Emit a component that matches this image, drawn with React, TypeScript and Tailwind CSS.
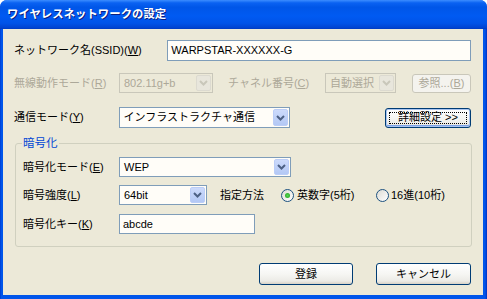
import React from "react";

const font = "font-['Liberation_Sans','Noto_Sans_CJK_JP',sans-serif]";

function M({ c }: { c: string }) {
  return (
    <span>
      (<span className="underline underline-offset-[1px]">{c}</span>)
    </span>
  );
}

function Chevron({ color }: { color: string }) {
  return (
    <svg width="9" height="6" viewBox="0 0 9 6">
      <polyline points="1,1 4.5,4.5 8,1" fill="none" stroke={color} strokeWidth="2" />
    </svg>
  );
}

function Select({
  value,
  w,
  h,
  disabled,
}: {
  value: string;
  w: string;
  h: string;
  disabled?: boolean;
}) {
  return (
    <div
      className={`${w} ${h} flex items-stretch border ${
        disabled ? "border-[#C9C7BA] bg-[#ECE9D8] text-[#ACA899]" : "border-[#7F9DB9] bg-[#FFFDF8] text-black"
      } p-[1px]`}
    >
      <div className="flex-1 flex items-center pl-[3px] whitespace-nowrap overflow-hidden">{value}</div>
      <div
        className={`w-[15px] flex items-center justify-center rounded-[2px] ${
          disabled
            ? "bg-[#E8E6DC] border border-[#DCDAD0]"
            : "bg-[linear-gradient(to_bottom,#CCDAFB,#B3C8F5)] border border-[#BBCDF7]"
        }`}
      >
        <Chevron color={disabled ? "#C9C7BA" : "#4D6185"} />
      </div>
    </div>
  );
}

function Input({ value, w, h }: { value: string; w: string; h: string }) {
  return (
    <div className={`${w} ${h} flex items-center border border-[#7F9DB9] bg-[#FFFDF8] pl-[3px] text-black`}>
      {value}
    </div>
  );
}

function Button({
  children,
  w,
  h,
  disabled,
  isDefault,
}: {
  children: React.ReactNode;
  w: string;
  h: string;
  disabled?: boolean;
  isDefault?: boolean;
}) {
  if (disabled) {
    return (
      <div
        className={`${w} ${h} flex items-center justify-center rounded-[3px] border border-[#C9C7BA] bg-[#F4F3EE] text-[#ACA899]`}
      >
        {children}
      </div>
    );
  }
  return (
    <div
      className={`${w} ${h} relative flex items-center justify-center rounded-[3px] border border-[#003C74] bg-[linear-gradient(to_bottom,#FFFFFF_0%,#F6F6F3_50%,#ECEBE6_85%,#D8D2C6_100%)] text-black ${
        isDefault ? "shadow-[inset_0_0_0_1px_#A9C4F0,inset_0_-1px_0_1px_#7BA2E7]" : ""
      }`}
    >
      {isDefault && (
        <div className="absolute inset-[3px] border border-dotted border-black pointer-events-none" />
      )}
      {children}
    </div>
  );
}

function Radio({ checked }: { checked?: boolean }) {
  return (
    <div className="w-[13px] h-[13px] rounded-full border border-[#1C5180] bg-[linear-gradient(135deg,#DCDBD4,#FFFFFF)] flex items-center justify-center">
      {checked && (
        <div className="w-[5px] h-[5px] rounded-full bg-[radial-gradient(circle,#55D551,#1E9E1E)]" />
      )}
    </div>
  );
}

export default function App() {
  return (
    <div className={`${font} text-[11px] leading-none bg-white w-[487px] h-[299px]`}>
      <div className="w-[487px] h-[299px] flex flex-col rounded-t-[7px] overflow-hidden bg-[#0050E6]">
        {/* Title bar */}
        <div className="h-[29px] shrink-0 flex items-center pl-[7px] bg-[linear-gradient(to_bottom,#3C8DFF_0%,#0A62F2_10%,#0056E8_25%,#005AF2_55%,#0053E8_80%,#0044D2_95%,#003AC0_100%)]">
          <span className="text-white font-bold text-[11.3px] tracking-[0.1px] [text-shadow:1px_1px_0_#0A1E80] mt-[1px]">
            ワイヤレスネットワークの設定
          </span>
        </div>
        {/* Frame */}
        <div className="flex-1 flex flex-col pl-[3px] pr-[4px] pb-[4px] bg-[linear-gradient(to_right,#0032C8_0px,#0055EA_1px,#0055EA_calc(100%-2px),#0030C0_100%)]">
          <div className="flex-1 bg-[#ECE9D8] flex flex-col pl-[11px] pr-[12px] pt-[11px] text-black">
            {/* Row 1 */}
            <div className="h-[21px] flex items-center">
              <div className="w-[154px] whitespace-nowrap">
                ネットワーク名(SSID)<M c="W" />
              </div>
              <Input value="WARPSTAR-XXXXXX-G" w="w-[305px]" h="h-[21px]" />
            </div>
            {/* Row 2 (disabled) */}
            <div className="h-[20px] mt-[12px] flex items-center text-[#ACA899]">
              <div className="w-[105px] whitespace-nowrap">
                無線動作モード<M c="R" />
              </div>
              <Select value="802.11g+b" w="w-[94px]" h="h-[20px]" disabled />
              <div className="w-[112px] pl-[15px] whitespace-nowrap">
                チャネル番号<M c="C" />
              </div>
              <Select value="自動選択" w="w-[71px]" h="h-[20px]" disabled />
              <div className="ml-[16px]">
                <Button w="w-[59px]" h="h-[19px]" disabled>
                  参照...<M c="B" />
                </Button>
              </div>
            </div>
            {/* Row 3 */}
            <div className="h-[21px] mt-[14px] flex items-center">
              <div className="w-[105px] whitespace-nowrap">
                通信モード<M c="Y" />
              </div>
              <Select value="インフラストラクチャ通信" w="w-[172px]" h="h-[21px]" />
              <div className="ml-[95px]">
                <Button w="w-[86px]" h="h-[20px]" isDefault>
                  詳細設定 &gt;&gt;
                </Button>
              </div>
            </div>
            {/* Group box */}
            <div className="relative mt-[15px] ml-[1px] w-[457px] border border-[#D0D0BF] rounded-[3px] pt-[13px] pb-[12px] px-[7px]">
              <div className="absolute left-[6px] top-[-6px] px-[1px] bg-[#ECE9D8] text-[#0046D5] text-[11.5px]">
                暗号化
              </div>
              <div className="h-[20px] flex items-center">
                <div className="w-[96px] whitespace-nowrap">
                  暗号化モード<M c="E" />
                </div>
                <Select value="WEP" w="w-[172px]" h="h-[20px]" />
              </div>
              <div className="h-[20px] mt-[8px] flex items-center">
                <div className="w-[96px] whitespace-nowrap">
                  暗号強度<M c="L" />
                </div>
                <Select value="64bit" w="w-[88px]" h="h-[20px]" />
                <div className="ml-[13px] w-[61px] whitespace-nowrap">指定方法</div>
                <Radio checked />
                <div className="ml-[3px] w-[79px] whitespace-nowrap">英数字(5桁)</div>
                <Radio />
                <div className="ml-[2px] whitespace-nowrap">16進(10桁)</div>
              </div>
              <div className="h-[20px] mt-[9px] flex items-center">
                <div className="w-[96px] whitespace-nowrap">
                  暗号化キー<M c="K" />
                </div>
                <Input value="abcde" w="w-[136px]" h="h-[20px]" />
              </div>
            </div>
            {/* Bottom buttons */}
            <div className="mt-[16px] flex justify-end gap-[23px] pr-[0px]">
              <Button w="w-[94px]" h="h-[22px]">登録</Button>
              <Button w="w-[95px]" h="h-[22px]">キャンセル</Button>
            </div>
          </div>
        </div>
      </div>
    </div>
  );
}
